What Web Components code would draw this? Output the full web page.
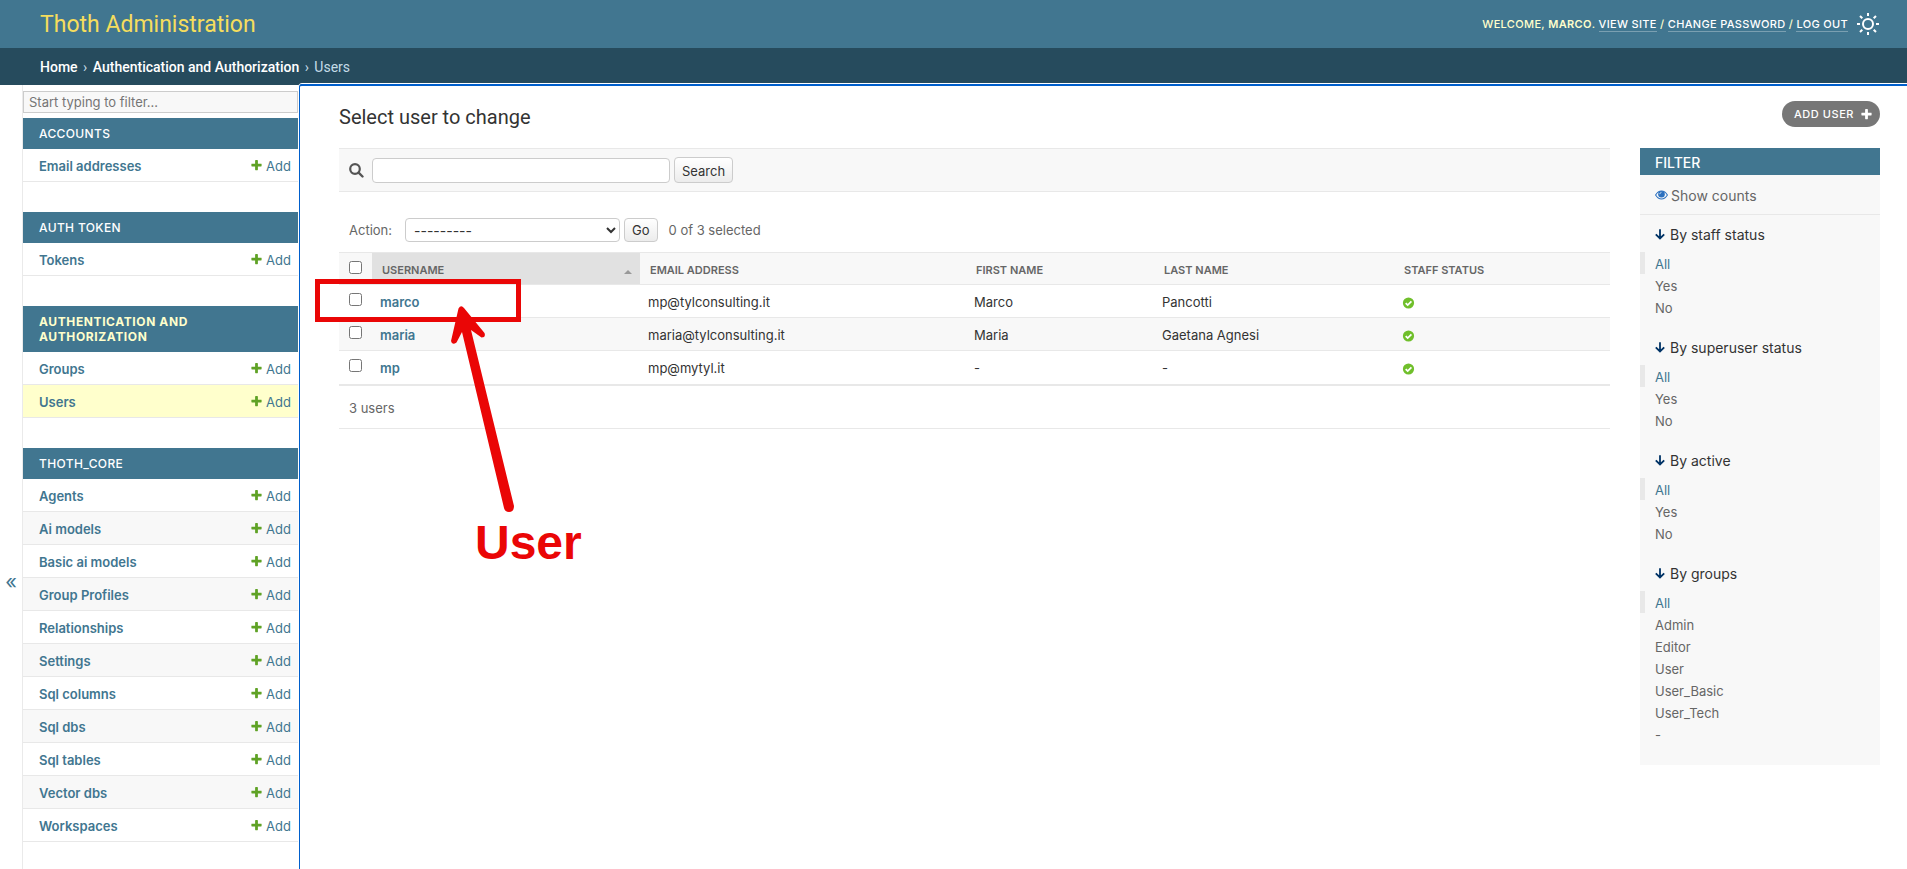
<!DOCTYPE html>
<html lang="en">
<head>
<meta charset="utf-8">
<title>Select user to change | Thoth Administration</title>
<style>
  html, body { margin: 0; }
  body {
    font-family: Inter, "Liberation Sans", sans-serif;
    font-size: 13px;
    line-height: 16px;
    color: #333;
    background: #fff;
    --primary: #417690;
    --secondary: #264b5d;
    --accent: #f5dd5d;
    --header-fg: #ffc;
    --quiet: #666;
    --hairline: #e8e8e8;
    --darkened: #f8f8f8;
    --border: #ccc;
    --mark: #ea0606;
    --title-font: Roboto, Inter, sans-serif;
  }
</style>
</head>
<body>
<admin-page>
  <admin-header slot="header" site="Thoth Administration"></admin-header>
  <bread-crumbs slot="crumbs"></bread-crumbs>
  <nav-sidebar slot="sidebar">
    <nav-module heading="Accounts" models="Email addresses"></nav-module>
    <nav-module heading="Auth Token" models="Tokens"></nav-module>
    <nav-module heading="Authentication and Authorization" models="Groups,Users" active="Users"></nav-module>
    <nav-module heading="Thoth_Core" models="Agents,Ai models,Basic ai models,Group Profiles,Relationships,Settings,Sql columns,Sql dbs,Sql tables,Vector dbs,Workspaces"></nav-module>
  </nav-sidebar>
  <change-list>
    <search-bar slot="list"></search-bar>
    <action-bar slot="list"></action-bar>
    <user-table slot="list"></user-table>
    <filter-panel slot="filter">
      <filter-group heading="By staff status" choices="All,Yes,No"></filter-group>
      <filter-group heading="By superuser status" choices="All,Yes,No"></filter-group>
      <filter-group heading="By active" choices="All,Yes,No"></filter-group>
      <filter-group heading="By groups" choices="All,Admin,Editor,User,User_Basic,User_Tech,-"></filter-group>
    </filter-panel>
    <call-out slot="overlay">User</call-out>
  </change-list>
</admin-page>

<script>
const BASE = `
  *, *::before, *::after { box-sizing: border-box; }
  a { color: var(--primary); text-decoration: none; }
  svg { display: block; flex: none; }
  input, select, button { font-family: inherit; margin: 0; color: #333; }
`;

const PLUS = 'M1600 736v192q0 40-28 68t-68 28h-416v416q0 40-28 68t-68 28h-192q-40 0-68-28t-28-68v-416h-416q-40 0-68-28t-28-68v-192q0-40 28-68t68-28h416v-416q0-40 28-68t68-28h192q40 0 68 28t28 68v416h416q40 0 68 28t28 68z';

function define(name, render) {
  customElements.define(name, class extends HTMLElement {
    constructor() {
      super();
      this.attachShadow({ mode: 'open' });
    }
    connectedCallback() {
      const { css, html } = render(this);
      this.shadowRoot.innerHTML = `<style>${BASE}${css}</style>${html}`;
    }
  });
}

define('admin-page', () => ({
  css: `
    :host { display: flex; flex-direction: column; min-height: 100vh; }
    .body { flex: 1; display: flex; }
    ::slotted(change-list) { flex: 1; min-width: 0; }
  `,
  html: `
    <slot name="header"></slot>
    <slot name="crumbs"></slot>
    <div class="body"><slot name="sidebar"></slot><slot></slot></div>`
}));

define('admin-header', host => ({
  css: `
    :host { display: block; }
    header { display: flex; align-items: center; justify-content: space-between; height: 48px;
      padding: 0 28px 0 40px; background: var(--primary); color: var(--header-fg); }
    h1 { margin: 0; padding-top: 2px; font-family: var(--title-font); font-size: 23px; line-height: 28px; font-weight: 400; }
    h1 a { color: var(--accent); }
    .tools { display: flex; align-items: center; gap: 9px; font-size: 11px; text-transform: uppercase; }
    .tools p { margin: 0; padding-bottom: 1px; font-weight: 500; letter-spacing: 0.03em; }
    .tools strong { font-weight: 600; }
    .tools p a { color: #fff; border-bottom: 1px solid rgba(255, 255, 255, 0.3); }
    button { padding: 0; border: 0; background: none; }
  `,
  html: `
    <header>
      <h1><a href="#">${host.getAttribute('site')}</a></h1>
      <div class="tools">
        <p>Welcome, <strong>Marco</strong>. <a href="#">View site</a> / <a href="#">Change password</a> / <a href="#">Log out</a></p>
        <button type="button" aria-label="Toggle theme">
          <svg width="22" height="22" viewBox="0 0 22 22" fill="none" stroke="#fff" stroke-width="2">
            <circle cx="11" cy="11" r="5"/>
            <path d="M11 0v3M11 19v3M0 11h3M19 11h3M3 3l2.300 2.300M16.700 16.700l2.300 2.300M3 19l2.300-2.300M16.700 5.300l2.300-2.300"/>
          </svg>
        </button>
      </div>
    </header>`
}));

define('bread-crumbs', () => ({
  css: `
    :host { display: block; }
    nav { height: 37px; padding: 11px 40px 9px; font-family: var(--title-font); font-size: 14px; line-height: 17px; background: var(--secondary); color: #c4dce8; }
    a { color: #fff; font-weight: 500; }
    span { margin: 0 2px; }
  `,
  html: `<nav aria-label="Breadcrumbs"><a href="#">Home</a> <span>›</span> <a href="#">Authentication and Authorization</a> <span>›</span> Users</nav>`
}));

define('nav-sidebar', () => ({
  css: `
    :host { display: flex; flex: none; width: 299px; }
    .toggle { display: grid; grid-template-rows: 7fr auto 4fr; flex: none; width: 23px; padding: 2px 0 0;
      border: 0; border-right: 1px solid #eaeaea; background: #fff; color: var(--primary); font-size: 20px; line-height: 20px; }
    .toggle span { grid-row: 2; }
    nav { flex: 1; min-width: 0; padding-top: 6px; border-right: 1px solid #eaeaea; }
    input { display: block; width: 100%; height: 22px; margin-bottom: 5px; padding: 1px 5px;
      border: 1px solid var(--border); border-radius: 0; background: var(--darkened); font-size: 13px; }
    input::placeholder { color: #757575; }
    .modules { display: grid; gap: 30px; }
  `,
  html: `
    <button class="toggle" type="button" aria-label="Toggle navigation"><span>«</span></button>
    <nav aria-label="Sidebar">
      <input type="search" placeholder="Start typing to filter..." aria-label="Filter navigation items">
      <div class="modules"><slot></slot></div>
    </nav>`
}));

define('nav-module', host => {
  const active = host.getAttribute('active');
  const rows = host.getAttribute('models').split(',').map(m => `
    <tr${m === active ? ' class="current"' : ''}>
      <th scope="row"><a href="#">${m}</a></th>
      <td><a class="add" href="#"><svg width="13" height="13" viewBox="0 0 1792 1792" fill="#5fa225"><path d="${PLUS}"/></svg>Add</a></td>
    </tr>`).join('');
  return {
    css: `
      :host { display: block; }
      table { width: 100%; border-collapse: separate; border-spacing: 0; }
      caption { padding: 8px 16px; text-align: left; font-size: 12px; line-height: 15px; font-weight: 500;
        letter-spacing: 0.03em; text-transform: uppercase; background: var(--primary); }
      caption a { color: #fff; }
      caption.current a { color: var(--header-fg); font-weight: 700; letter-spacing: 0.05em; }
      th, td { padding: 9px 16px 7px; border-bottom: 1px solid var(--hairline); line-height: 16px; text-align: left; font-weight: 600; }
      td { width: 1px; padding-left: 0; padding-right: 7px; font-weight: 400; }
      tr:nth-child(even) > * { background: var(--darkened); }
      tr.current > * { background: var(--header-fg); }
      .add { display: flex; align-items: center; gap: 3px; }
      .add svg { margin-bottom: 1px; }
    `,
    html: `
      <table>
        <caption${active ? ' class="current"' : ''}><a href="#">${host.getAttribute('heading')}</a></caption>
        <tbody>${rows}</tbody>
      </table>`
  };
});

define('change-list', () => ({
  css: `
    :host { display: block; position: relative; padding: 16px 27px 40px 40px; }
    :host::before { content: ""; position: absolute; inset: -1px 0 0 0; pointer-events: none;
      border-top: 2px solid #005fcc; border-left: 1px solid #005fcc; border-top-left-radius: 3px; box-shadow: 0 -1px #fff, -1px 0 #fff; }
    .top { display: flex; justify-content: space-between; align-items: flex-start; margin-bottom: 21px; }
    h2 { margin: 6px 0 0; font-family: var(--title-font); font-size: 20px; line-height: 20px; font-weight: 400; }
    .add { display: flex; align-items: center; gap: 6px; height: 26px; padding: 0 7px 0 12px; border-radius: 13px;
      background: #777; color: #fff; font-size: 11px; font-weight: 500; letter-spacing: 0.05em; text-transform: uppercase; }
    .columns { display: flex; align-items: flex-start; gap: 30px; }
    .list { flex: 1; min-width: 0; }
  `,
  html: `
    <div class="top">
      <h2>Select user to change</h2>
      <a class="add" href="#">Add user <svg width="13" height="13" viewBox="0 0 1792 1792" fill="#fff"><path d="${PLUS}"/></svg></a>
    </div>
    <div class="columns">
      <div class="list"><slot name="list"></slot></div>
      <slot name="filter"></slot>
    </div>
    <slot name="overlay"></slot>`
}));

define('search-bar', () => ({
  css: `
    :host { display: block; }
    form { display: flex; align-items: center; gap: 4px; height: 44px; padding: 0 10px;
      border-top: 1px solid var(--hairline); border-bottom: 1px solid var(--hairline); background: var(--darkened); }
    label { margin-right: 4px; }
    input { width: 298px; height: 25px; padding: 2px 5px; border: 1px solid var(--border); border-radius: 4px; background: #fff; font-size: 13px; }
    button { height: 26px; padding: 1px 7px 0; border: 1px solid var(--border); border-radius: 4px;
      background: linear-gradient(#fff, #ececec); font-size: 13px; }
  `,
  html: `
    <form role="search" onsubmit="return false">
      <label for="searchbar"><svg width="15" height="15" viewBox="0 0 15 15" fill="none" stroke="#555">
        <circle cx="6" cy="6" r="4.800" stroke-width="2.200"/><path d="M9.600 9.600l3.900 3.900" stroke-width="2.400" stroke-linecap="round"/></svg></label>
      <input id="searchbar" type="text" aria-label="Search users">
      <button type="submit">Search</button>
    </form>`
}));

define('action-bar', () => ({
  css: `
    :host { display: block; }
    form { display: flex; align-items: center; gap: 4px; padding: 26px 10px 10px; color: var(--quiet); }
    label { display: flex; align-items: center; gap: 13px; }
    select { width: 215px; height: 24px; padding: 0 4px; border: 1px solid var(--border); border-radius: 4px; background: #fff; font-size: 14px; }
    button { height: 24px; padding: 0 7px; border: 1px solid var(--border); border-radius: 4px;
      background: linear-gradient(#fff, #ececec); font-size: 13px; }
    .count { margin-left: 7px; }
  `,
  html: `
    <form onsubmit="return false">
      <label>Action: <select><option>---------</option><option>Delete selected users</option></select></label>
      <button type="submit">Go</button>
      <span class="count">0 of 3 selected</span>
    </form>`
}));

define('user-table', () => {
  const users = [
    ['marco', 'mp@tylconsulting.it', 'Marco', 'Pancotti'],
    ['maria', 'maria@tylconsulting.it', 'Maria', 'Gaetana Agnesi'],
    ['mp', 'mp@mytyl.it', '-', '-']
  ];
  const rows = users.map(([name, mail, first, last]) => `
    <tr>
      <td class="pick"><input type="checkbox" aria-label="Select ${name}"></td>
      <th scope="row"><a href="#">${name}</a></th>
      <td>${mail}</td><td>${first}</td><td>${last}</td>
      <td><svg class="yes" width="13" height="13" viewBox="0 0 13 13" role="img" aria-label="True"><circle cx="6.500" cy="6" r="5.600" fill="#70bf2b"/><path d="M3.700 6.100l2 2 3.700-3.700" fill="none" stroke="#fff" stroke-width="1.800"/></svg></td>
    </tr>`).join('');
  return {
    css: `
      :host { display: block; }
      table { width: 100%; table-layout: fixed; border-collapse: separate; border-spacing: 0; }
      .c-pick { width: 33px; } .c-name { width: 268px; } .c-mail { width: 326px; }
      .c-first { width: 188px; } .c-last { width: 240px; } .c-staff { width: 216px; }
      th, td { padding: 9px 8px 7px; text-align: left; vertical-align: top; line-height: 16px; }
      tbody th, tbody td { border-bottom: 1px solid var(--hairline); height: 33px; }
      tbody tr:last-child > * { border-bottom: 0; }
      tbody th { font-weight: 600; }
      tbody tr:nth-child(even) { background: var(--darkened); }
      thead th { padding: 9px 10px 6px; border-top: 1px solid var(--hairline); border-bottom: 1px solid var(--hairline); background: var(--darkened);
        color: var(--quiet); font-size: 11px; font-weight: 600; text-transform: uppercase; }
      thead a { color: inherit; }
      thead th.sorted { padding-right: 8px; background: #e1e1e1; }
      .sorted div { display: flex; align-items: center; justify-content: space-between; }
      .sorted svg { margin-top: 3px; }
      th.pick, td.pick { padding-top: 8px; padding-left: 10px; }
      .pick input { display: block; width: 13px; height: 13px; }
      .yes { margin-top: 3px; }
      .total { margin: 0; padding: 14px 10px 12px; border-top: 2px solid var(--hairline); border-bottom: 1px solid var(--hairline); color: var(--quiet); }
    `,
    html: `
      <table>
        <colgroup><col class="c-pick"><col class="c-name"><col class="c-mail"><col class="c-first"><col class="c-last"><col class="c-staff"></colgroup>
        <thead><tr>
          <th class="pick"><input type="checkbox" aria-label="Select all users"></th>
          <th class="sorted" scope="col" aria-sort="ascending"><div><a href="#">Username</a><svg width="8" height="4" viewBox="0 0 8 4" fill="#999"><path d="M4 0l4 4H0z"/></svg></div></th>
          <th scope="col"><a href="#">Email address</a></th>
          <th scope="col"><a href="#">First name</a></th>
          <th scope="col"><a href="#">Last name</a></th>
          <th scope="col"><a href="#">Staff status</a></th>
        </tr></thead>
        <tbody>${rows}</tbody>
      </table>
      <p class="total">3 users</p>`
  };
});

define('filter-panel', () => ({
  css: `
    :host { display: block; flex: none; width: 240px; padding-bottom: 10px; background: var(--darkened); }
    h2 { margin: 0; padding: 6px 15px 4px; font-size: 14px; line-height: 17px; font-weight: 500;
      text-transform: uppercase; background: var(--primary); color: #fff; }
    .counts { display: flex; align-items: center; gap: 3px; height: 40px; padding: 3px 15px 0; border-bottom: 1px solid var(--hairline); color: var(--quiet); font-size: 14px; }
    .counts svg { margin-bottom: 2px; }
  `,
  html: `
    <h2>Filter</h2>
    <a class="counts" href="#"><svg width="13" height="10" viewBox="0 0 13 10">
      <path d="M.6 5Q3 1 6.500 1t5.900 4Q10 9 6.500 9T.6 5z" fill="#f8f8f8" stroke="#2b70bf" stroke-width="1.100"/>
      <circle cx="6.500" cy="4.300" r="3.300" fill="#2b70bf"/><path d="M4.700 4.200q.1-1.600 1.800-1.800" fill="none" stroke="#fff" stroke-width=".7"/></svg>Show counts</a>
    <slot></slot>`
}));

define('filter-group', host => ({
  css: `
    :host { display: block; padding-bottom: 10px; }
    summary { display: flex; align-items: center; gap: 5px; height: 37px; padding: 2px 15px 0; list-style: none; font-size: 14px; }
    ul { margin: 0; padding: 0; list-style: none; }
    li { height: 22px; padding: 1px 0 0 15px; line-height: 22px; }
    li a { color: var(--quiet); }
    li:first-child { padding-left: 10px; border-left: 5px solid var(--hairline); }
    li:first-child a { color: var(--primary); }
  `,
  html: `
    <details open>
      <summary><svg width="10" height="11" viewBox="0 0 10 11" fill="none" stroke="#036" stroke-width="1.800"><path d="M5 .3v9M.8 5.300L5 9.500l4.200-4.200"/></svg>${host.getAttribute('heading')}</summary>
      <ul>${host.getAttribute('choices').split(',').map(c => `<li><a href="#">${c}</a></li>`).join('')}</ul>
    </details>`
}));

/* Hand-drawn pointer laid over the list: a frame, an arrow and its label. */
define('call-out', () => ({
  css: `
    :host { display: block; position: absolute; left: 16px; top: 194px; width: 280px; pointer-events: none; color: var(--mark); }
    .frame { width: 206px; height: 43px; border: 5px solid currentColor; }
    svg { position: absolute; left: 130px; top: 24px; }
    .label { position: absolute; left: 160px; top: 236px; font: bold 48px/56px "Liberation Sans", sans-serif; }
  `,
  html: `
    <div class="frame"></div>
    <svg width="70" height="210" viewBox="445 303 70 210" fill="#ea0606">
      <path d="M458.500 308.500Q461 304.500 464 308L484.500 333Q486 337.500 481.500 337.500L471 330L514 506Q514 512 509 512Q505 512 504 508L462 332L456.500 342.500Q452 345.500 451 341Z"/>
    </svg>
    <div class="label"><slot></slot></div>`
}));
</script>
</body>
</html>
